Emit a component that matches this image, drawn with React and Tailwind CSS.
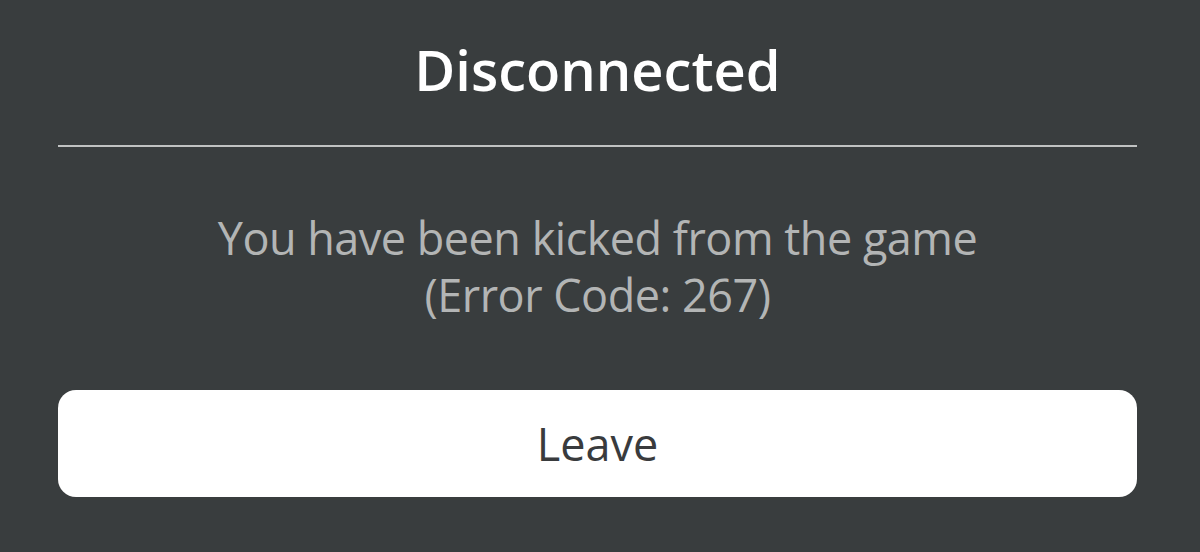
export default function App() {
  return (
    <div className="w-[1200px] h-[552px] bg-[#393d3e] overflow-hidden pl-[58px]" style={{ fontFamily: '"Open Sans", "Noto Sans", sans-serif' }}>
      <div className="w-[1079px] flex flex-col items-center">
        <div className="h-[145px] w-full pt-[41px] flex justify-center">
          <h1 className="text-[56px] font-semibold text-white leading-[56px] tracking-[0px]">Disconnected</h1>
        </div>
        <div className="w-full h-[2px] bg-[#c0c2c2]" />
        <div className="mt-[62px] flex flex-col items-center text-[#b3b5b5] text-[45px] leading-[57px] tracking-[-0.5px]">
          <p>You have been kicked from the game</p>
          <p>(Error Code: 267)</p>
        </div>
        <button className="mt-[67px] w-full h-[107px] rounded-[18px] bg-white flex items-center justify-center text-[#393b3d] text-[45px] leading-none">
          Leave
        </button>
      </div>
    </div>
  );
}
